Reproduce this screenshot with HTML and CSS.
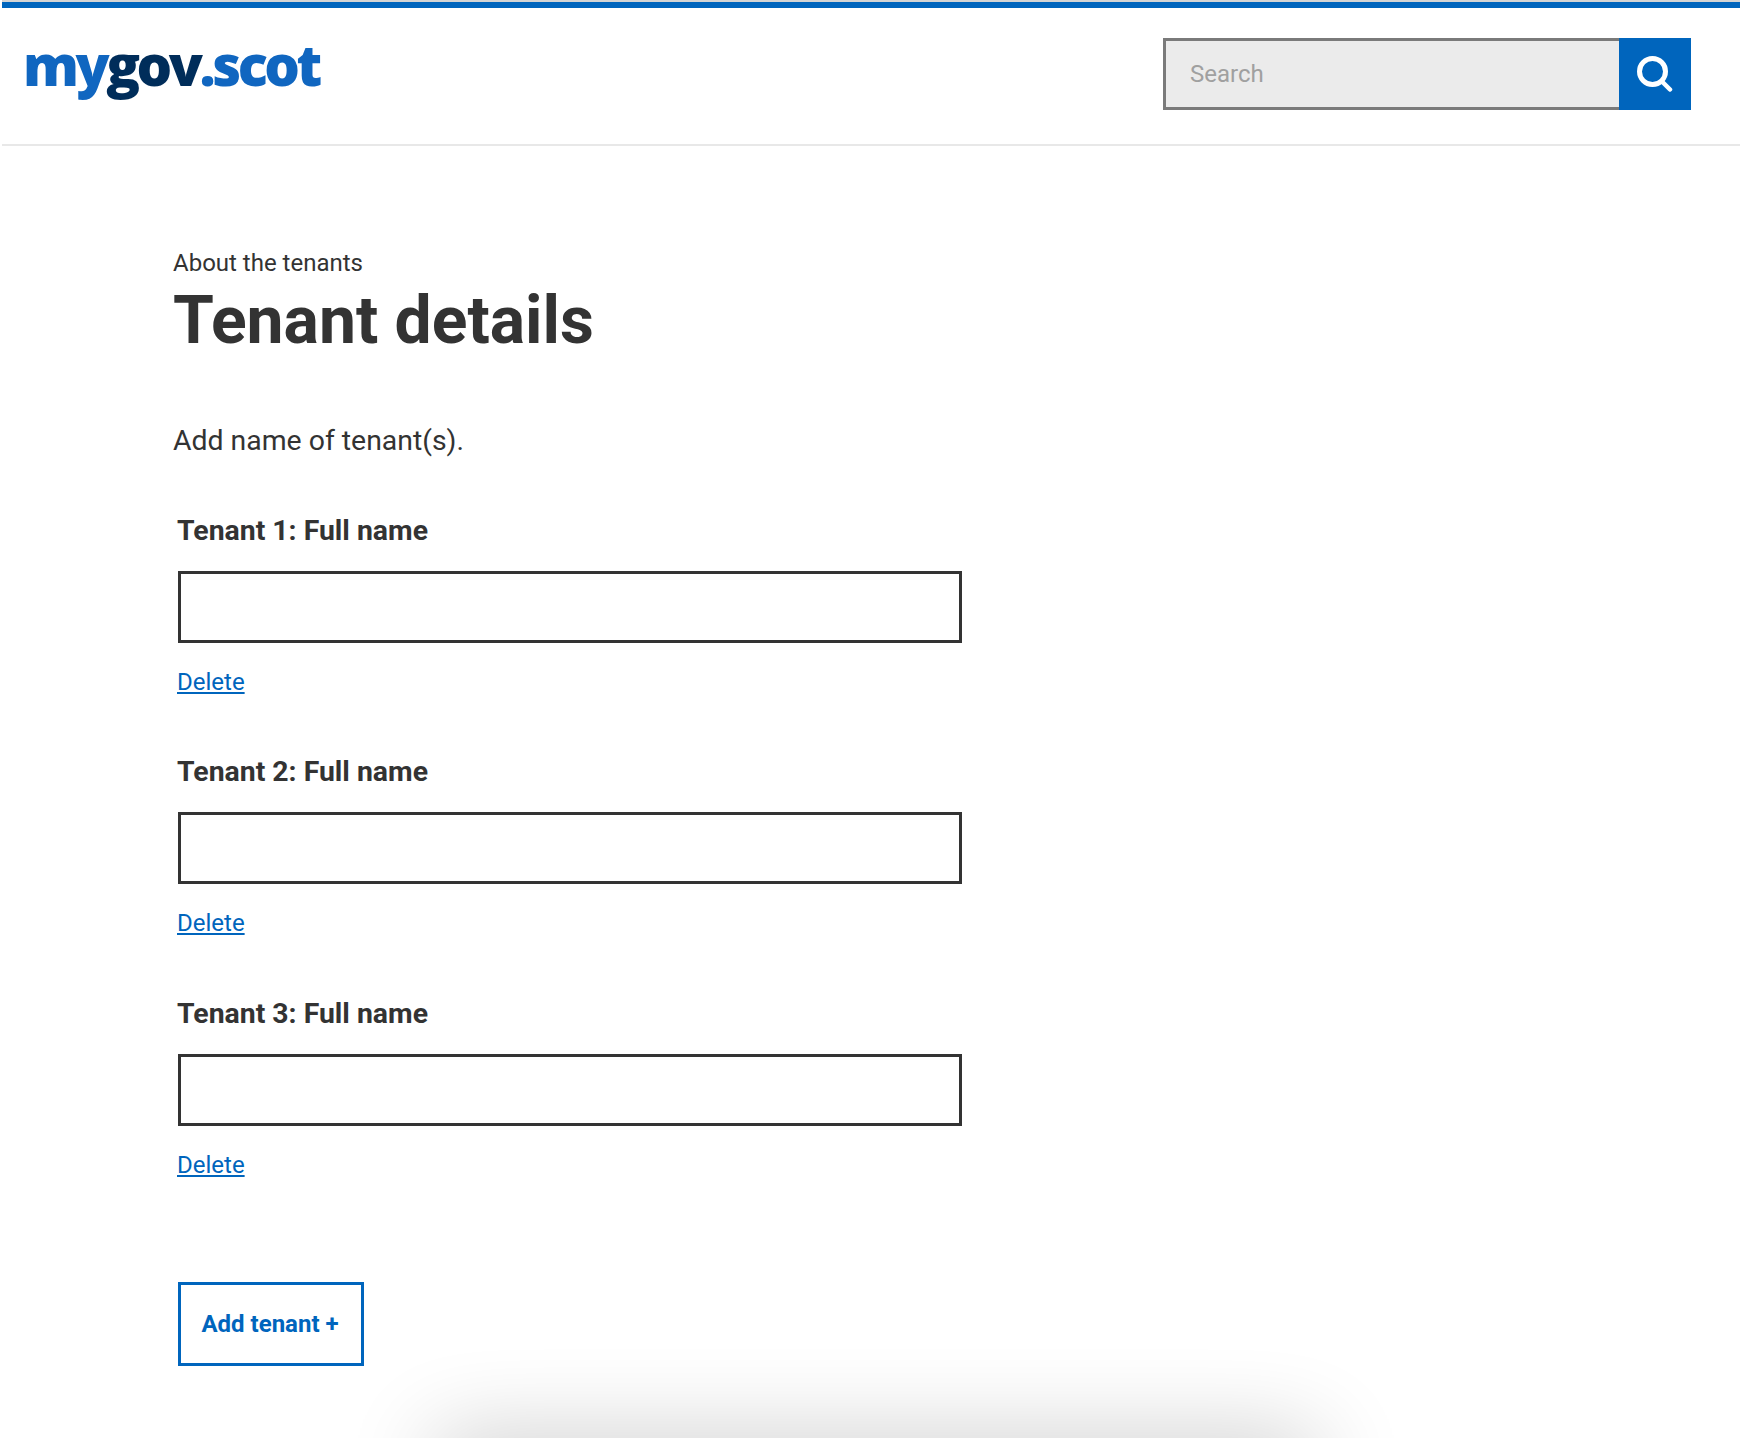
FILE: index.html
```html
<!DOCTYPE html>
<html lang="en">
<head>
<meta charset="utf-8">
<title>Tenant details</title>
<link rel="stylesheet" href="styles.css">
</head>
<body>
<header class="site-header">
  <div class="logo"><span class="logo-light">my</span><span class="logo-dark">gov</span><span class="logo-light">.scot</span></div>
  <form class="search">
    <input class="search-input" type="text" placeholder="Search">
    <button class="search-button" type="button" aria-label="Search">
      <svg class="search-icon" viewBox="0 0 36 36" fill="none" stroke="#fff" stroke-linecap="round"><circle cx="15.5" cy="15.5" r="13" stroke-width="5"/><path d="M25 25.500l8 8" stroke-width="4.500"/></svg>
    </button>
  </form>
</header>
<main class="content">
  <p class="eyebrow">About the tenants</p>
  <h1 class="title">Tenant details</h1>
  <p class="lead">Add name of tenant(s).</p>
  <div class="tenants">
    <div class="tenant">
      <label class="tenant-label">Tenant 1: Full name</label>
      <input class="tenant-input" type="text">
      <a class="delete" href="#">Delete</a>
    </div>
    <div class="tenant">
      <label class="tenant-label">Tenant 2: Full name</label>
      <input class="tenant-input" type="text">
      <a class="delete" href="#">Delete</a>
    </div>
    <div class="tenant">
      <label class="tenant-label">Tenant 3: Full name</label>
      <input class="tenant-input" type="text">
      <a class="delete" href="#">Delete</a>
    </div>
    <button class="add-button" type="button">Add tenant +</button>
  </div>
</main>
<div class="bottom-shadow"></div>
</body>
</html>
```
FILE: styles.css
```css
* { box-sizing: border-box; }
html, body { margin: 0; padding: 0; height: 1438px; overflow: hidden; background: #fff; }
body { font-family: Roboto, "Liberation Sans", sans-serif; color: #333; position: relative; }
.site-header {
  margin: 2px 0 0 2px;
  height: 144px;
  border-top: 6px solid #0065bd;
  border-bottom: 2px solid #e8e8e8;
  box-shadow: 0 -2px 0 0 #d4d4d4;
  display: flex;
  align-items: flex-start;
  justify-content: space-between;
  padding: 0 49px 0 21px;
}
.logo { font-family: "Open Sans", sans-serif; font-weight: 800; font-size: 56px; line-height: 60px; letter-spacing: -3.5px; margin-top: 26px; }
.logo-light { color: #1066c0; }
.logo-dark { color: #002d5a; }
.search { display: flex; margin-top: 30px; height: 72px; width: 528px; }
.search-input {
  flex: 1; min-width: 0; border: 3px solid #7a7a7a; border-right: 0; background: #ebebeb;
  padding: 0 0 0 24px; font: 400 24px Roboto, sans-serif; color: #333; outline: 0; border-radius: 0;
}
.search-input::placeholder { color: #a0a0a0; opacity: 1; }
.search-button { width: 72px; border: 0; padding: 0; background: #0065bd; display: flex; align-items: center; justify-content: center; }
.search-icon { width: 36px; height: 36px; }
.content { padding: 102px 0 0 173px; }
.eyebrow { margin: 0; font-size: 24px; line-height: 30px; }
.title { margin: 7px 0 0; font-size: 66px; line-height: 72px; font-weight: 700; letter-spacing: 0; }
.lead { margin: 64px 0 0; font-size: 28.4px; line-height: 40px; }
.tenants { margin: 19px 0 0 5px; }
.tenant { display: flex; flex-direction: column; align-items: flex-start; padding-top: 31px; height: 241.4px; }
.tenant-label { margin-left: -1px; font-size: 28.4px; line-height: 40px; font-weight: 700; }
.tenant-input { width: 784px; height: 72px; margin-top: 20px; border: 3px solid #333; border-radius: 0; background: #fff; outline: 0; }
.delete { margin: 19px 0 0 -1px; font-size: 24px; line-height: 40px; color: #0065bd; }
.add-button {
  display: block; margin-top: 78px; width: 186px; height: 84px; border: 3px solid #0065bd; background: #fff;
  color: #0065bd; font: 700 24px Roboto, sans-serif; padding: 0 2px 0 0;
}
.bottom-shadow {
  position: absolute; left: 436px; right: 424px; top: 1440px; height: 60px;
  box-shadow: 0 0 90px 0 rgba(0,0,0,.24);
  background: rgba(0,0,0,.24);
}
```
